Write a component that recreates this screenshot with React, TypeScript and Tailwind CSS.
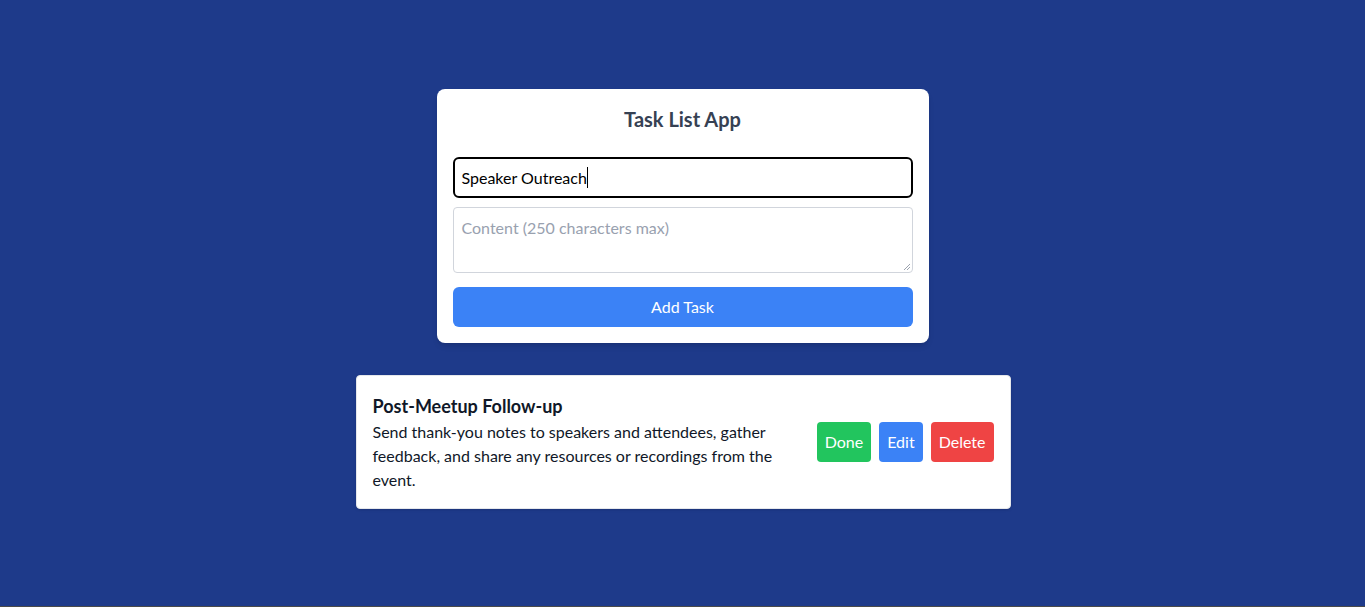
export default function App() {
  return (
    <div
      className="h-[607px] bg-[#1e3a8a] flex flex-col"
      style={{ fontFamily: 'Lato, "Noto Sans", sans-serif' }}
    >
      <div className="flex-1 flex flex-col items-center pt-[89px]">
        {/* Form Card */}
        <div className="w-[492px] bg-white rounded-lg p-4 shadow-md">
          <h1 className="text-xl font-bold text-gray-700 text-center mb-6">Task List App</h1>
          <div className="w-full h-[41px] border-2 border-black rounded-md px-[7px] flex items-center text-base text-black">
            <span>Speaker Outreach</span>
            <span className="w-px h-[21px] bg-black"></span>
          </div>
          <div className="relative w-full h-[66px] border border-gray-300 rounded mt-[9px] px-2 py-2 text-base text-gray-400">
            Content (250 characters max)
            <svg className="absolute right-[1px] bottom-[1px]" width="9" height="9" viewBox="0 0 9 9">
              <path d="M8 2 L2 8 M8 5 L5 8" stroke="#9ca3af" strokeWidth="1" />
            </svg>
          </div>
          <button className="w-full h-10 mt-[14px] bg-[#3b82f6] text-white rounded-md text-base">Add Task</button>
        </div>

        {/* Task Card */}
        <div className="w-[655px] ml-px mt-8 bg-white border border-gray-200 rounded p-4 flex items-center gap-4 shadow">
          <div className="flex-1">
            <h2 className="text-lg font-bold text-gray-900">Post-Meetup Follow-up</h2>
            <p className="text-base text-gray-900 leading-6">
              Send thank-you notes to speakers and attendees, gather feedback, and share any resources or recordings from the event.
            </p>
          </div>
          <div className="flex gap-2">
            <button className="h-10 px-2 bg-[#22c55e] text-white rounded">Done</button>
            <button className="h-10 px-2 bg-[#3b82f6] text-white rounded">Edit</button>
            <button className="h-10 px-2 bg-[#ef4444] text-white rounded">Delete</button>
          </div>
        </div>
      </div>
      <div className="h-px bg-[#4a4a4a]"></div>
    </div>
  )
}
